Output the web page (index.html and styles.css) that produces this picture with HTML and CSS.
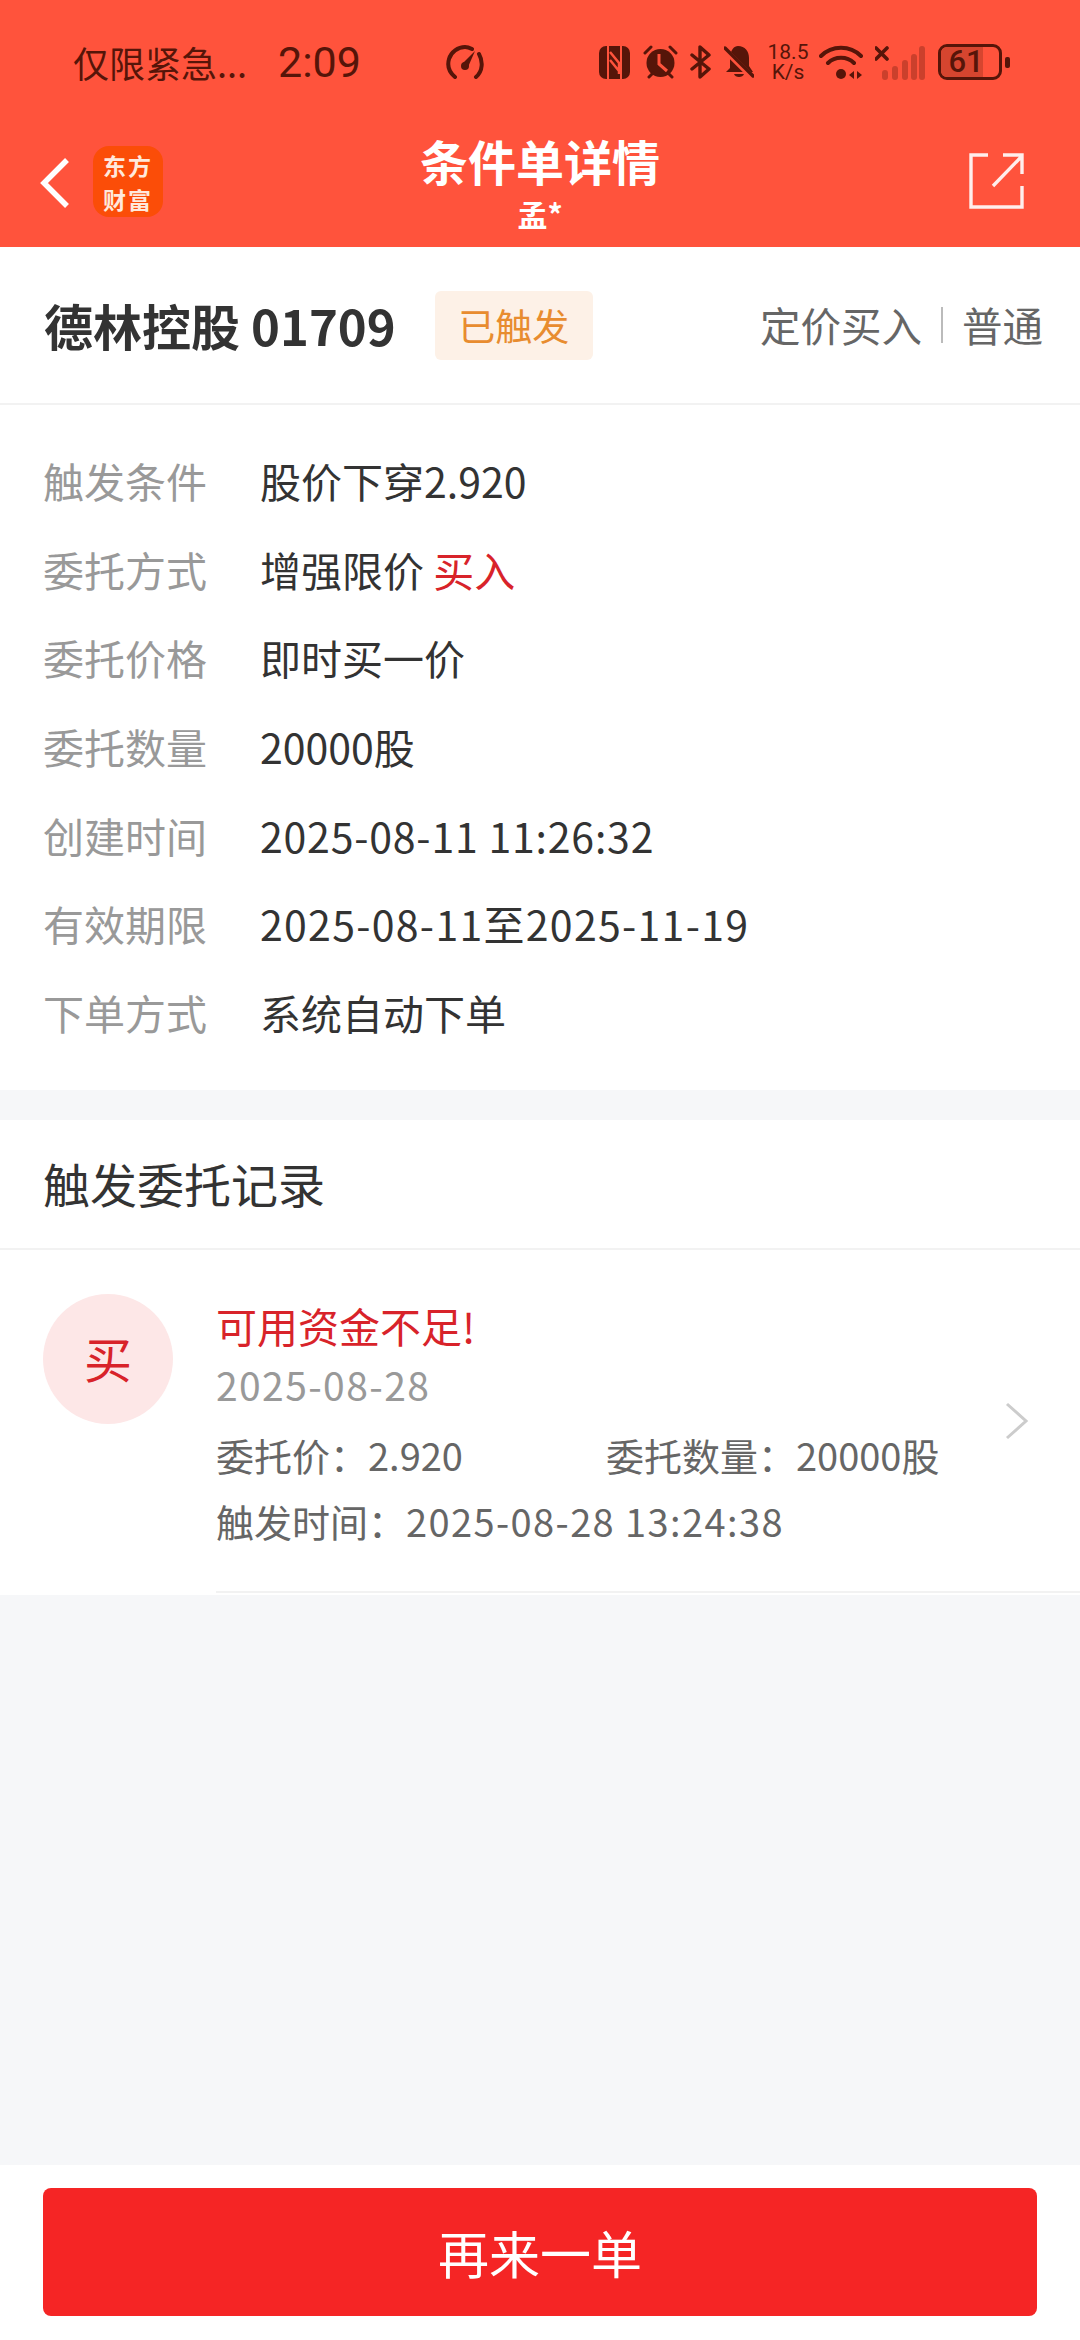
FILE: index.html
```html
<!DOCTYPE html>
<html lang="zh">
<head>
  <meta charset="utf-8">
  <title>条件单详情</title>
  <link rel="stylesheet" href="styles.css">
</head>
<body>
  <div class="page">
    <header class="top">
      <div class="status">
        <span class="status-note">仅限紧急...</span>
        <span class="status-time">2:09</span>
        <svg class="ic-gauge" width="38" height="34" viewBox="0 0 38 34">
          <path d="M9 32C3 27 1 21 3 14C5 7 12 2 19 2C22 2 24 3 26 4" fill="none" stroke="#561509" stroke-width="4" stroke-linecap="round"/>
          <path d="M33 9C37 16 37 26 30 32" fill="none" stroke="#561509" stroke-width="4" stroke-linecap="round"/>
          <path d="M17 18L29 6L22 22Z" fill="#561509"/>
          <circle cx="19" cy="21" r="4" fill="#561509"/>
        </svg>
        <div class="status-icons">
          <svg class="ic-nfc" width="31" height="33" viewBox="0 0 31 33">
            <rect width="31" height="33" rx="7" fill="#561509"/>
            <path d="M9 0V33M22 0V33" stroke="#ff533c" stroke-width="2"/>
            <path d="M11 6L20 17V28M11 14L20 25" fill="none" stroke="#ff533c" stroke-width="2.5"/>
          </svg>
          <svg class="ic-alarm" width="35" height="34" viewBox="0 0 35 34">
            <circle cx="17.5" cy="18" r="14" fill="#561509"/>
            <path d="M2 8L8 2M33 8L27 2M6 32L10 28M29 32L25 28" stroke="#561509" stroke-width="3" stroke-linecap="round"/>
            <path d="M16 9V19L24 26" fill="none" stroke="#ff533c" stroke-width="3"/>
          </svg>
          <svg class="ic-bt" width="22" height="34" viewBox="0 0 22 34">
            <path d="M2 24L19 10L10 2V32L19 24L2 10" fill="none" stroke="#561509" stroke-width="3.4" stroke-linecap="round" stroke-linejoin="round"/>
          </svg>
          <svg class="ic-bell" width="30" height="34" viewBox="0 0 30 34">
            <path d="M14 1C21 1 25 6 25 13V21L29 27H2L6 23V11C7 5 10 1 14 1Z" fill="#561509"/>
            <path d="M10 29H20C19 33 11 33 10 29Z" fill="#561509"/>
            <path d="M1 5L29 33" stroke="#ff533c" stroke-width="6"/>
            <path d="M1 3L29 31" stroke="#561509" stroke-width="3.4" stroke-linecap="round"/>
          </svg>
          <div class="net-speed"><span>18.5</span><span>K/s</span></div>
          <svg class="ic-wifi" width="44" height="35" viewBox="0 0 44 35">
            <path d="M2 11C13 0 31 0 42 11M9 18C16 11 28 11 35 18" fill="none" stroke="#561509" stroke-width="4" stroke-linecap="round"/>
            <circle cx="22" cy="29" r="5" fill="#561509"/>
            <path d="M35 26V34L30 30ZM38 26V34L43 30Z" fill="#561509"/>
          </svg>
          <svg class="ic-signal" width="50" height="35" viewBox="0 0 50 35">
            <path d="M1 3L12 14M12 3L1 14" stroke="#561509" stroke-width="3.6" stroke-linecap="round"/>
            <g fill="#561509" opacity="0.3">
              <rect x="7" y="25" width="6" height="10" rx="3"/>
              <rect x="17" y="21" width="6" height="14" rx="3"/>
              <rect x="27" y="15" width="6" height="20" rx="3"/>
              <rect x="36" y="9" width="6" height="26" rx="3"/>
              <rect x="44" y="1" width="6" height="34" rx="3"/>
            </g>
          </svg>
          <div class="battery"><div class="battery-fill"></div><span class="battery-num">61</span></div>
          <div class="battery-nub"></div>
        </div>
      </div>
      <div class="nav">
        <svg class="ic-back" width="30" height="52" viewBox="0 0 30 52">
          <path d="M27 3L4 26L27 49" fill="none" stroke="#fff" stroke-width="5.5"/>
        </svg>
        <div class="logo"><span>东方</span><span>财富</span></div>
        <div class="nav-title">
          <div class="nav-main">条件单详情</div>
          <div class="nav-sub">孟*</div>
        </div>
        <svg class="ic-share" width="55" height="56" viewBox="0 0 55 56">
          <path d="M19 2H2V54H53V33" fill="none" stroke="#fff" stroke-width="3.4" opacity="0.9"/>
          <path d="M24 33L52 4M34 2H53V21" fill="none" stroke="#fff" stroke-width="3.4" opacity="0.9"/>
        </svg>
      </div>
    </header>

    <section class="summary">
      <span class="stock">德林控股 01709</span>
      <span class="tag">已触发</span>
      <div class="order-type">
        <span>定价买入</span><i class="sep"></i><span>普通</span>
      </div>
    </section>

    <section class="details">
      <div class="row"><span class="label">触发条件</span><span>股价下穿2.920</span></div>
      <div class="row"><span class="label">委托方式</span><span>增强限价 <em class="buy">买入</em></span></div>
      <div class="row"><span class="label">委托价格</span><span>即时买一价</span></div>
      <div class="row"><span class="label">委托数量</span><span>20000股</span></div>
      <div class="row"><span class="label">创建时间</span><span class="num">2025-08-11 11:26:32</span></div>
      <div class="row"><span class="label">有效期限</span><span class="num-wide">2025-08-11至2025-11-19</span></div>
      <div class="row"><span class="label">下单方式</span><span>系统自动下单</span></div>
    </section>

    <section class="records">
      <h2 class="records-title">触发委托记录</h2>
      <div class="record">
        <div class="record-badge">买</div>
        <div class="record-body">
          <div class="record-msg">可用资金不足!</div>
          <div class="record-date">2025-08-28</div>
          <div class="record-line">
            <span class="record-price">委托价：2.920</span>
            <span>委托数量：20000股</span>
          </div>
          <div class="record-line record-line-last">触发时间：<span class="record-time">2025-08-28 13:24:38</span></div>
        </div>
        <svg class="ic-more" width="24" height="38" viewBox="0 0 24 38">
          <path d="M2 2L21 19L2 36" fill="none" stroke="#ccc" stroke-width="3"/>
        </svg>
      </div>
    </section>

    <div class="spacer"></div>

    <footer class="footer">
      <button class="again">再来一单</button>
    </footer>
  </div>
</body>
</html>
```

FILE: styles.css
```css
* {
  box-sizing: border-box;
}

body {
  margin: 0;
  font-family: "Noto Sans CJK SC", "Noto Sans", sans-serif;
  color: #333;
  background: #f6f7f9;
}

.page {
  width: 1080px;
  height: 2340px;
  display: flex;
  flex-direction: column;
}

/* red header with status bar */
.top {
  height: 247px;
  background: #ff533c;
  flex-shrink: 0;
}

.status {
  height: 124px;
  display: flex;
  align-items: center;
  padding: 0 0 0 73px;
  color: #561509;
}

.status-note {
  font-size: 36px;
  line-height: 44px;
  width: 205px;
  white-space: nowrap;
}

.status-time {
  font-family: "Roboto", sans-serif;
  font-size: 43px;
  line-height: 44px;
  width: 168px;
}

.ic-gauge {
  flex-shrink: 0;
}

.status-icons {
  display: flex;
  align-items: center;
  margin-left: 115px;
}

.ic-alarm {
  margin-left: 13px;
}

.ic-bt {
  margin-left: 12px;
}

.ic-bell {
  margin-left: 12px;
}

.net-speed {
  margin-left: 13px;
  width: 42px;
  display: flex;
  flex-direction: column;
  align-items: center;
  font-family: "Roboto", sans-serif;
  font-size: 21px;
  line-height: 20px;
}

.ic-wifi {
  margin-left: 10px;
}

.ic-signal {
  margin-left: 12px;
}

.battery {
  margin-left: 13px;
  position: relative;
  width: 64px;
  height: 36px;
  border: 3px solid #561509;
  border-radius: 9px;
  overflow: hidden;
  display: flex;
  align-items: center;
  justify-content: center;
}

.battery-fill {
  position: absolute;
  left: 0;
  top: 0;
  bottom: 0;
  width: 42px;
  background: #d6452f;
}

.battery-num {
  position: relative;
  font-family: "Roboto", sans-serif;
  font-size: 31px;
  font-weight: 500;
  line-height: 30px;
  padding-right: 8px;
}

.battery-nub {
  margin-left: 3px;
  width: 5px;
  height: 11px;
  border-radius: 2px;
  background: #561509;
}

.nav {
  position: relative;
  height: 123px;
  display: flex;
  align-items: center;
  padding: 0 56px 0 40px;
  color: #fff;
}

.ic-back {
  flex-shrink: 0;
  margin-top: -6px;
}

.logo {
  margin: -8px 0 0 23px;
  width: 70px;
  height: 71px;
  border-radius: 16px;
  background: #fb4d08;
  display: flex;
  flex-direction: column;
  align-items: center;
  justify-content: center;
  font-weight: 700;
  font-size: 23px;
  letter-spacing: 2px;
  line-height: 34px;
  color: #ffe9dc;
}

.nav-title {
  position: absolute;
  left: 0;
  right: 0;
  top: 0;
  text-align: center;
}

.nav-main {
  font-size: 48px;
  font-weight: 700;
  line-height: 72px;
}

.nav-sub {
  font-size: 30px;
  font-weight: 700;
  line-height: 34px;
}

.ic-share {
  margin: -9px 0 0 auto;
}

/* stock name row */
.summary {
  height: 158px;
  background: #fff;
  border-bottom: 2px solid #f2f2f2;
  display: flex;
  align-items: center;
  padding: 0 37px 0 44px;
  flex-shrink: 0;
}

.stock {
  font-size: 49px;
  font-weight: 700;
  line-height: 60px;
  color: #333;
}

.tag {
  margin-left: 39px;
  height: 69px;
  width: 158px;
  border-radius: 6px;
  background: #fdf1e7;
  color: #e88c2f;
  font-size: 37px;
  line-height: 69px;
  text-align: center;
}

.order-type {
  margin-left: auto;
  display: flex;
  align-items: center;
  font-size: 40.5px;
  line-height: 52px;
  color: #666;
}

.sep {
  width: 2px;
  height: 36px;
  margin: 0 19px;
  background: #bbb;
}

/* order details */
.details {
  background: #fff;
  padding: 31px 0 34px 43px;
  flex-shrink: 0;
}

.row {
  display: flex;
  height: 88.6px;
  align-items: center;
  font-size: 41px;
  color: #333;
}

.label {
  width: 217px;
  color: #999;
  flex-shrink: 0;
}

.num {
  letter-spacing: 0.8px;
}

.num-wide {
  letter-spacing: 1.3px;
}

.buy {
  font-style: normal;
  color: #d8232a;
}

/* trigger records */
.records {
  margin-top: 30px;
  background: #fff;
  flex-shrink: 0;
}

.records-title {
  margin: 0;
  height: 130px;
  border-bottom: 2px solid #f2f2f2;
  padding-left: 43px;
  font-size: 47px;
  font-weight: 400;
  line-height: 126px;
  color: #333;
}

.record {
  position: relative;
  height: 345px;
  display: flex;
  padding: 44px 0 0 43px;
}

.record-badge {
  width: 130px;
  height: 130px;
  border-radius: 50%;
  background: #fde7e7;
  color: #d8232a;
  font-size: 48px;
  line-height: 126px;
  text-align: center;
  flex-shrink: 0;
}

.record-body {
  margin-left: 43px;
  flex: 1;
  height: 299px;
  border-bottom: 2px solid #f2f2f2;
}

.record-msg {
  font-size: 41px;
  line-height: 52px;
  margin-top: 5px;
  color: #d8232a;
}

.record-date {
  margin-top: 8px;
  font-size: 39px;
  line-height: 50px;
  letter-spacing: 1.4px;
  color: #999;
}

.record-line {
  display: flex;
  margin-top: 21px;
  font-size: 38px;
  line-height: 50px;
  color: #666;
}

.record-line-last {
  margin-top: 16px;
}

.record-time {
  letter-spacing: 1.4px;
}

.record-price {
  width: 390px;
}

.ic-more {
  position: absolute;
  right: 51px;
  top: 152px;
}

.spacer {
  flex: 1;
}

.footer {
  height: 175px;
  background: #fff;
  padding: 23px 43px 0;
  flex-shrink: 0;
}

.again {
  display: block;
  width: 100%;
  height: 128px;
  border: none;
  border-radius: 8px;
  background: #f52525;
  color: #fff;
  font-family: "Noto Sans CJK SC", sans-serif;
  font-size: 51px;
}
```
